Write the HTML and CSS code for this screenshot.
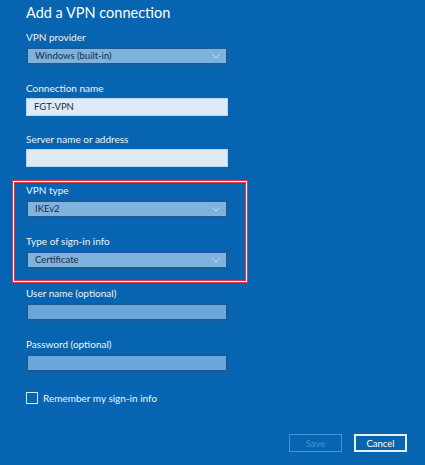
FILE: index.html
```html
<!DOCTYPE html>
<html lang="en">
<head>
    <meta charset="UTF-8">
    <title>Add a VPN connection</title>
    <link rel="stylesheet" href="styles.css">
</head>
<body>
    <div class="page">
        <h1>Add a VPN connection</h1>

        <div class="field">
            <label>VPN provider</label>
            <div class="select">Windows (built-in)<svg class="chevron" width="8" height="5" viewBox="0 0 8 5"><polyline points="0.5,0.5 4,4 7.5,0.5" fill="none" stroke="#c9def0" stroke-width="1"/></svg></div>
        </div>

        <div class="field">
            <label>Connection name</label>
            <div class="input light">FGT-VPN</div>
        </div>

        <div class="field">
            <label>Server name or address</label>
            <div class="input light"></div>
        </div>

        <!-- bloco destacado -->
        <div class="highlight">
            <div class="field">
                <label>VPN type</label>
                <div class="select">IKEv2<svg class="chevron" width="8" height="5" viewBox="0 0 8 5"><polyline points="0.5,0.5 4,4 7.5,0.5" fill="none" stroke="#c9def0" stroke-width="1"/></svg></div>
            </div>
            <div class="field last">
                <label>Type of sign-in info</label>
                <div class="select">Certificate<svg class="chevron" width="8" height="5" viewBox="0 0 8 5"><polyline points="0.5,0.5 4,4 7.5,0.5" fill="none" stroke="#c9def0" stroke-width="1"/></svg></div>
            </div>
        </div>

        <div class="field">
            <label>User name (optional)</label>
            <div class="input disabled"></div>
        </div>

        <div class="field">
            <label>Password (optional)</label>
            <div class="input disabled"></div>
        </div>

        <div class="check-row">
            <span class="checkbox"></span>
            <span>Remember my sign-in info</span>
        </div>

        <div class="buttons">
            <button class="btn save">Save</button>
            <button class="btn cancel">Cancel</button>
        </div>
    </div>
</body>
</html>
```

FILE: styles.css
```css
* {
    margin: 0;
    padding: 0;
    box-sizing: border-box;
}

body {
    background: #0764b1;
    font-family: 'Lato', 'Noto Sans', sans-serif;
    color: #eef4fa;
    width: 425px;
    height: 465px;
    overflow: hidden;
}

.page {
    padding: 3px 0 0 26px;
}

h1 {
    font-size: 14.5px;
    font-weight: 400;
    line-height: 20px;
    margin-bottom: 7px;
    color: #fff;
}

.field {
    width: 202px;
    margin-bottom: 16px;
}

.field label {
    display: block;
    font-size: 10px;
    line-height: 14px;
    margin-bottom: 3px;
}

.select,
.input {
    height: 18px;
    font-size: 9.5px;
    line-height: 14px;
    padding: 0 7px;
    color: #1b2a3a;
    display: flex;
    align-items: center;
}

.select {
    background: #7eb3de;
    border: 2px solid #195a98;
    justify-content: space-between;
    padding-right: 6px;
}

.input.light {
    background: #dfeaf5;
    border: 1px solid #bcd5ec;
}

.input.disabled {
    background: #6aa6da;
    border: 2px solid #185a99;
}

.highlight {
    width: 236px;
    margin: -3px 0 3px -14px;
    padding: 2px 0 13px 13px;
    border: 1px solid #d93a4b;
    box-shadow: inset 0 0 0 1px #ffffff, inset 0 0 0 2px #d93a4b;
}

.highlight .field.last {
    margin-bottom: 0;
}

.check-row {
    display: flex;
    align-items: center;
    gap: 5px;
    font-size: 10px;
    margin-top: 20px;
}

.checkbox {
    width: 12px;
    height: 12px;
    border: 1.5px solid #d6e6f4;
}

.buttons {
    display: flex;
    justify-content: flex-end;
    gap: 12px;
    margin-top: 30px;
    padding-right: 18px;
}

.btn {
    width: 53px;
    height: 18px;
    background: none;
    font-family: inherit;
    font-size: 9.5px;
}

.btn.save {
    border: 1.5px solid #4a92d0;
    color: #4a92d0;
}

.btn.cancel {
    border: 2px solid #e6f1fa;
    color: #fff;
}
```
